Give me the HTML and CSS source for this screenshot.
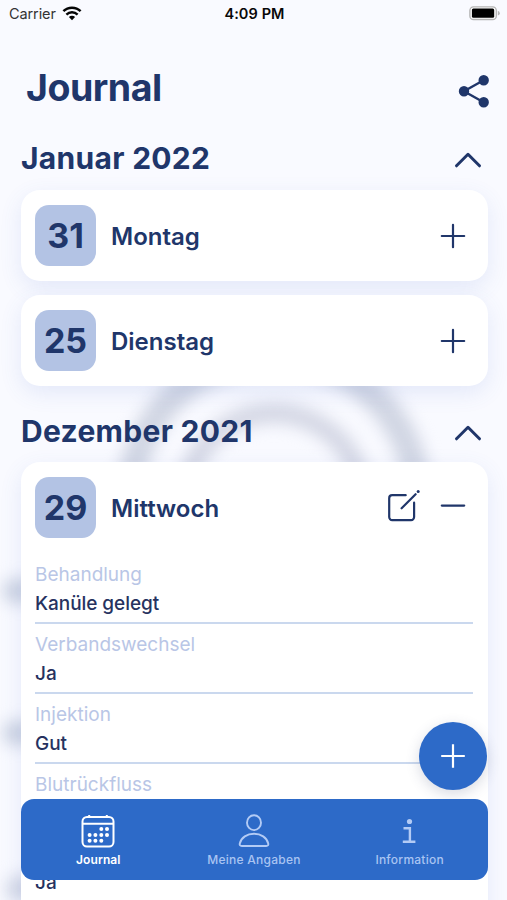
FILE: index.html
```html
<!DOCTYPE html>
<html lang="de">
<head>
<meta charset="utf-8">
<title>Journal</title>
<link rel="stylesheet" href="styles.css">
</head>
<body>
<div class="app">
  <svg class="backdrop" viewBox="0 0 507 900" aria-hidden="true">
    <g fill="none">
      <circle cx="274" cy="500" r="144" stroke="#d0d5e3" stroke-width="27"/>
      <circle cx="274" cy="502" r="89" stroke="#d3d6e4" stroke-width="20"/>
    </g>
    <ellipse cx="20" cy="591" rx="18" ry="13" fill="#cbd2e2"/>
    <ellipse cx="20" cy="733" rx="18" ry="13" fill="#cbd2e2"/>
    <ellipse cx="22" cy="890" rx="16" ry="15" fill="#d0d5e4"/>
  </svg>

  <div class="status">
    <div class="carrier"><span>Carrier</span>
      <svg width="20" height="15" viewBox="0 0 20 15" fill="none" stroke="#050505">
        <path d="M1.4 5.2a12.3 12.3 0 0 1 17.2 0" stroke-width="2.5"/>
        <path d="M4.4 8.6a8 8 0 0 1 11.2 0" stroke-width="2.4"/>
        <path d="M10 14.2L6.9 11.1a4.4 4.4 0 0 1 6.2 0z" fill="#050505" stroke="none"/>
      </svg>
    </div>
    <div class="time">4:09 PM</div>
    <svg class="battery" width="31" height="15" viewBox="0 0 31 15">
      <rect x=".9" y=".9" width="26.4" height="12.6" rx="3.6" fill="#fff" stroke="#b5b5b5" stroke-width="1.4"/>
      <rect x="2.9" y="2.6" width="22.3" height="9.2" rx="1.5" fill="#000"/>
      <path d="M28.8 4.8q2 .6 2 2.4t-2 2.4z" fill="#b5b5b5"/>
    </svg>
  </div>

  <header class="head">
    <h1>Journal</h1>
    <svg width="32" height="34" viewBox="0 0 32 34" stroke="#20366a" stroke-width="2.4" fill="#20366a">
      <path d="M25.6 6.3L6 17.2l19.6 11" fill="none"/>
      <circle cx="25.7" cy="6.2" r="4"/><circle cx="6" cy="17.2" r="4"/><circle cx="25.7" cy="28.2" r="4"/>
    </svg>
  </header>

  <div class="month"><h2>Januar 2022</h2>
    <svg class="chev" width="28" height="18" viewBox="0 0 28 18"><path d="M2.5 14.8L14 3.3l11.5 11.5"/></svg>
  </div>
  <section class="card day">
    <div class="date">31</div><h3>Montag</h3>
    <svg class="ico" width="26" height="26" viewBox="0 0 26 26"><path d="M1.8 13h22.4M13 1.8v22.4"/></svg>
  </section>
  <section class="card day">
    <div class="date">25</div><h3>Dienstag</h3>
    <svg class="ico" width="26" height="26" viewBox="0 0 26 26"><path d="M1.8 13h22.4M13 1.8v22.4"/></svg>
  </section>

  <div class="month second"><h2>Dezember 2021</h2>
    <svg class="chev" width="28" height="18" viewBox="0 0 28 18"><path d="M2.5 14.8L14 3.3l11.5 11.5"/></svg>
  </div>
  <section class="card open">
    <div class="day">
      <div class="date">29</div><h3>Mittwoch</h3>
      <svg class="ico edit" width="34" height="34" viewBox="0 0 34 34"><path d="M18.7 6.2H5.2a3 3 0 0 0-3 3v18.9a3 3 0 0 0 3 3h18.9a3 3 0 0 0 3-3V13.7M14.6 19.3L28.6 5.2"/><circle cx="31.2" cy="2.5" r="1.5"/></svg>
      <svg class="ico" width="26" height="26" viewBox="0 0 26 26"><path d="M1.8 10.6h22.4"/></svg>
    </div>
    <dl>
      <div class="field"><dt>Behandlung</dt><dd>Kanüle gelegt</dd></div>
      <div class="field"><dt>Verbandswechsel</dt><dd>Ja</dd></div>
      <div class="field"><dt>Injektion</dt><dd>Gut</dd></div>
      <div class="field"><dt>Blutrückfluss</dt><dd>&nbsp;</dd></div>
      <div class="field last"><dd>Ja</dd></div>
    </dl>
  </section>

  <button class="fab" aria-label="+">
    <svg width="26" height="26" viewBox="0 0 26 26"><path d="M1.2 13h23.6M13 1.2v23.6"/></svg>
  </button>

  <nav class="tabs">
    <div class="tab active">
      <svg width="34" height="34" viewBox="0 0 34 34" fill="none" stroke="#fff" stroke-width="2">
        <rect x="1.5" y="3" width="31" height="29.5" rx="4.5"/><path d="M1.5 9.7h31M8.2 1v3M25.8 1v3"/>
        <g fill="#fff" stroke="none"><circle cx="20.3" cy="15" r="2"/><circle cx="26" cy="15" r="2"/><circle cx="8.6" cy="20.9" r="2"/><circle cx="14.4" cy="20.9" r="2"/><circle cx="20.3" cy="20.9" r="2"/><circle cx="26" cy="20.9" r="2"/><circle cx="8.6" cy="26.7" r="2"/><circle cx="14.4" cy="26.7" r="2"/><circle cx="20.3" cy="26.7" r="2"/></g>
      </svg><span>Journal</span>
    </div>
    <div class="tab">
      <svg width="34" height="34" viewBox="0 0 34 34" fill="none" stroke="#b3cbf5" stroke-width="1.9">
        <ellipse cx="17" cy="8.7" rx="7" ry="7.4"/><path d="M4.8 32h24.4c1.8 0 2.4-1 2-2.6C29.7 23.5 24 19.8 17 19.8S4.3 23.5 2.8 29.4c-.4 1.6.2 2.6 2 2.6z"/>
      </svg><span>Meine Angaben</span>
    </div>
    <div class="tab">
      <svg width="34" height="34" viewBox="0 0 34 34" fill="none" stroke="#b3cbf5" stroke-width="2.4">
        <circle cx="16.500" cy="7.500" r="2.600" fill="#b3cbf5" stroke="none"/><path d="M10.500 14.200h6.400V28M9.800 27.800h12.600"/>
      </svg><span>Information</span>
    </div>
  </nav>
</div>
</body>
</html>
```

FILE: styles.css
```css
* { box-sizing: border-box; }
body, h1, h2, h3, dl, dt, dd { margin: 0; }
body { background: #f9faff; font-family: Inter, "Liberation Sans", sans-serif; color: #20366a; }
svg { display: block; flex: none; }
.app { position: relative; width: 507px; height: 900px; overflow: hidden; isolation: isolate; }
.backdrop { position: absolute; inset: 0; z-index: -1; width: 507px; height: 900px; filter: blur(8px); }

.status { display: grid; grid-template-columns: 1fr auto 1fr; align-items: center; height: 26px; padding: 0 7px 0 9px; color: #111; font-size: 14.5px; }
.carrier { display: flex; align-items: center; gap: 6px; color: #333; letter-spacing: -.1px; }
.time { font-weight: 600; color: #080808; letter-spacing: .1px; }
.battery { justify-self: end; }

.head { display: flex; align-items: center; justify-content: space-between; height: 44px; margin-top: 40px; padding: 0 17px 0 26px; }
h1 { font-size: 37.5px; line-height: 44px; font-weight: 700; letter-spacing: -.5px; }
.head svg { margin-top: 6px; }

.month { display: flex; align-items: center; justify-content: space-between; height: 40px; margin-top: 28px; padding: 0 25px 0 21px; }
h2 { font-size: 30px; line-height: 40px; font-weight: 700; white-space: nowrap; letter-spacing: .3px; }
.chev { margin-top: 3px; fill: none; stroke: #20366a; stroke-width: 3; stroke-linecap: round; stroke-linejoin: round; }

.card { margin: 0 19.5px 0 20.5px; background: #fff; border-radius: 19px; box-shadow: 0 7px 22px rgba(75, 110, 205, .12); }
.month + .card { margin-top: 12px; }
.day { display: flex; align-items: center; height: 91px; padding: 0 22px 0 14.500px; }
.day + .day { margin-top: 14px; }
.date { display: flex; align-items: center; justify-content: center; width: 61px; height: 61px; margin-right: 15px; border-radius: 14px; background: #b3c3e4; font-size: 34px; font-weight: 700; }
h3 { flex: 1; font-size: 24px; line-height: 30px; font-weight: 600; padding-top: 2px; }
.ico { fill: none; stroke: #20366a; stroke-width: 2.2; stroke-linecap: round; stroke-linejoin: round; }
.ico circle { fill: #20366a; stroke: none; }
.edit { margin: -4px 19px 0 0; }

.month.second { margin-top: 25px; }
.month.second + .card { margin-top: 11.2px; }
.open { height: 480px; }
dl { padding: 2px 14.5px 0; }
.field { height: 69.7px; padding-top: 6px; border-bottom: 2px solid #cad8ee; }
.field:first-child { height: 69px; padding-top: 5px; }
.field dt { font-size: 19px; line-height: 29px; color: #b9c6e6; }
.field dd { font-size: 19px; line-height: 29px; font-weight: 500; color: #26325f; letter-spacing: -.05px; }
.field.last { padding-top: 35px; border: 0; }

.fab { position: absolute; left: 419px; top: 722px; display: grid; place-items: center; width: 68px; height: 68px; padding: 0; border: 0; border-radius: 50%; background: #2d6ac8; box-shadow: 0 4px 14px rgba(60, 70, 110, .2); }
.fab path { fill: none; stroke: #fff; stroke-width: 2.2; }

.tabs { position: absolute; left: 20.5px; right: 19.5px; top: 799.4px; display: grid; grid-template-columns: repeat(3, 1fr); height: 81px; padding-top: 15px; border-radius: 13px; background: #2d6ac8; }
.tab { display: flex; flex-direction: column; align-items: center; gap: 4px; color: #a9c4f2; font-size: 12px; line-height: 15px; font-weight: 500; letter-spacing: .25px; }
.tab.active { color: #fff; font-weight: 600; letter-spacing: .1px; }
```
